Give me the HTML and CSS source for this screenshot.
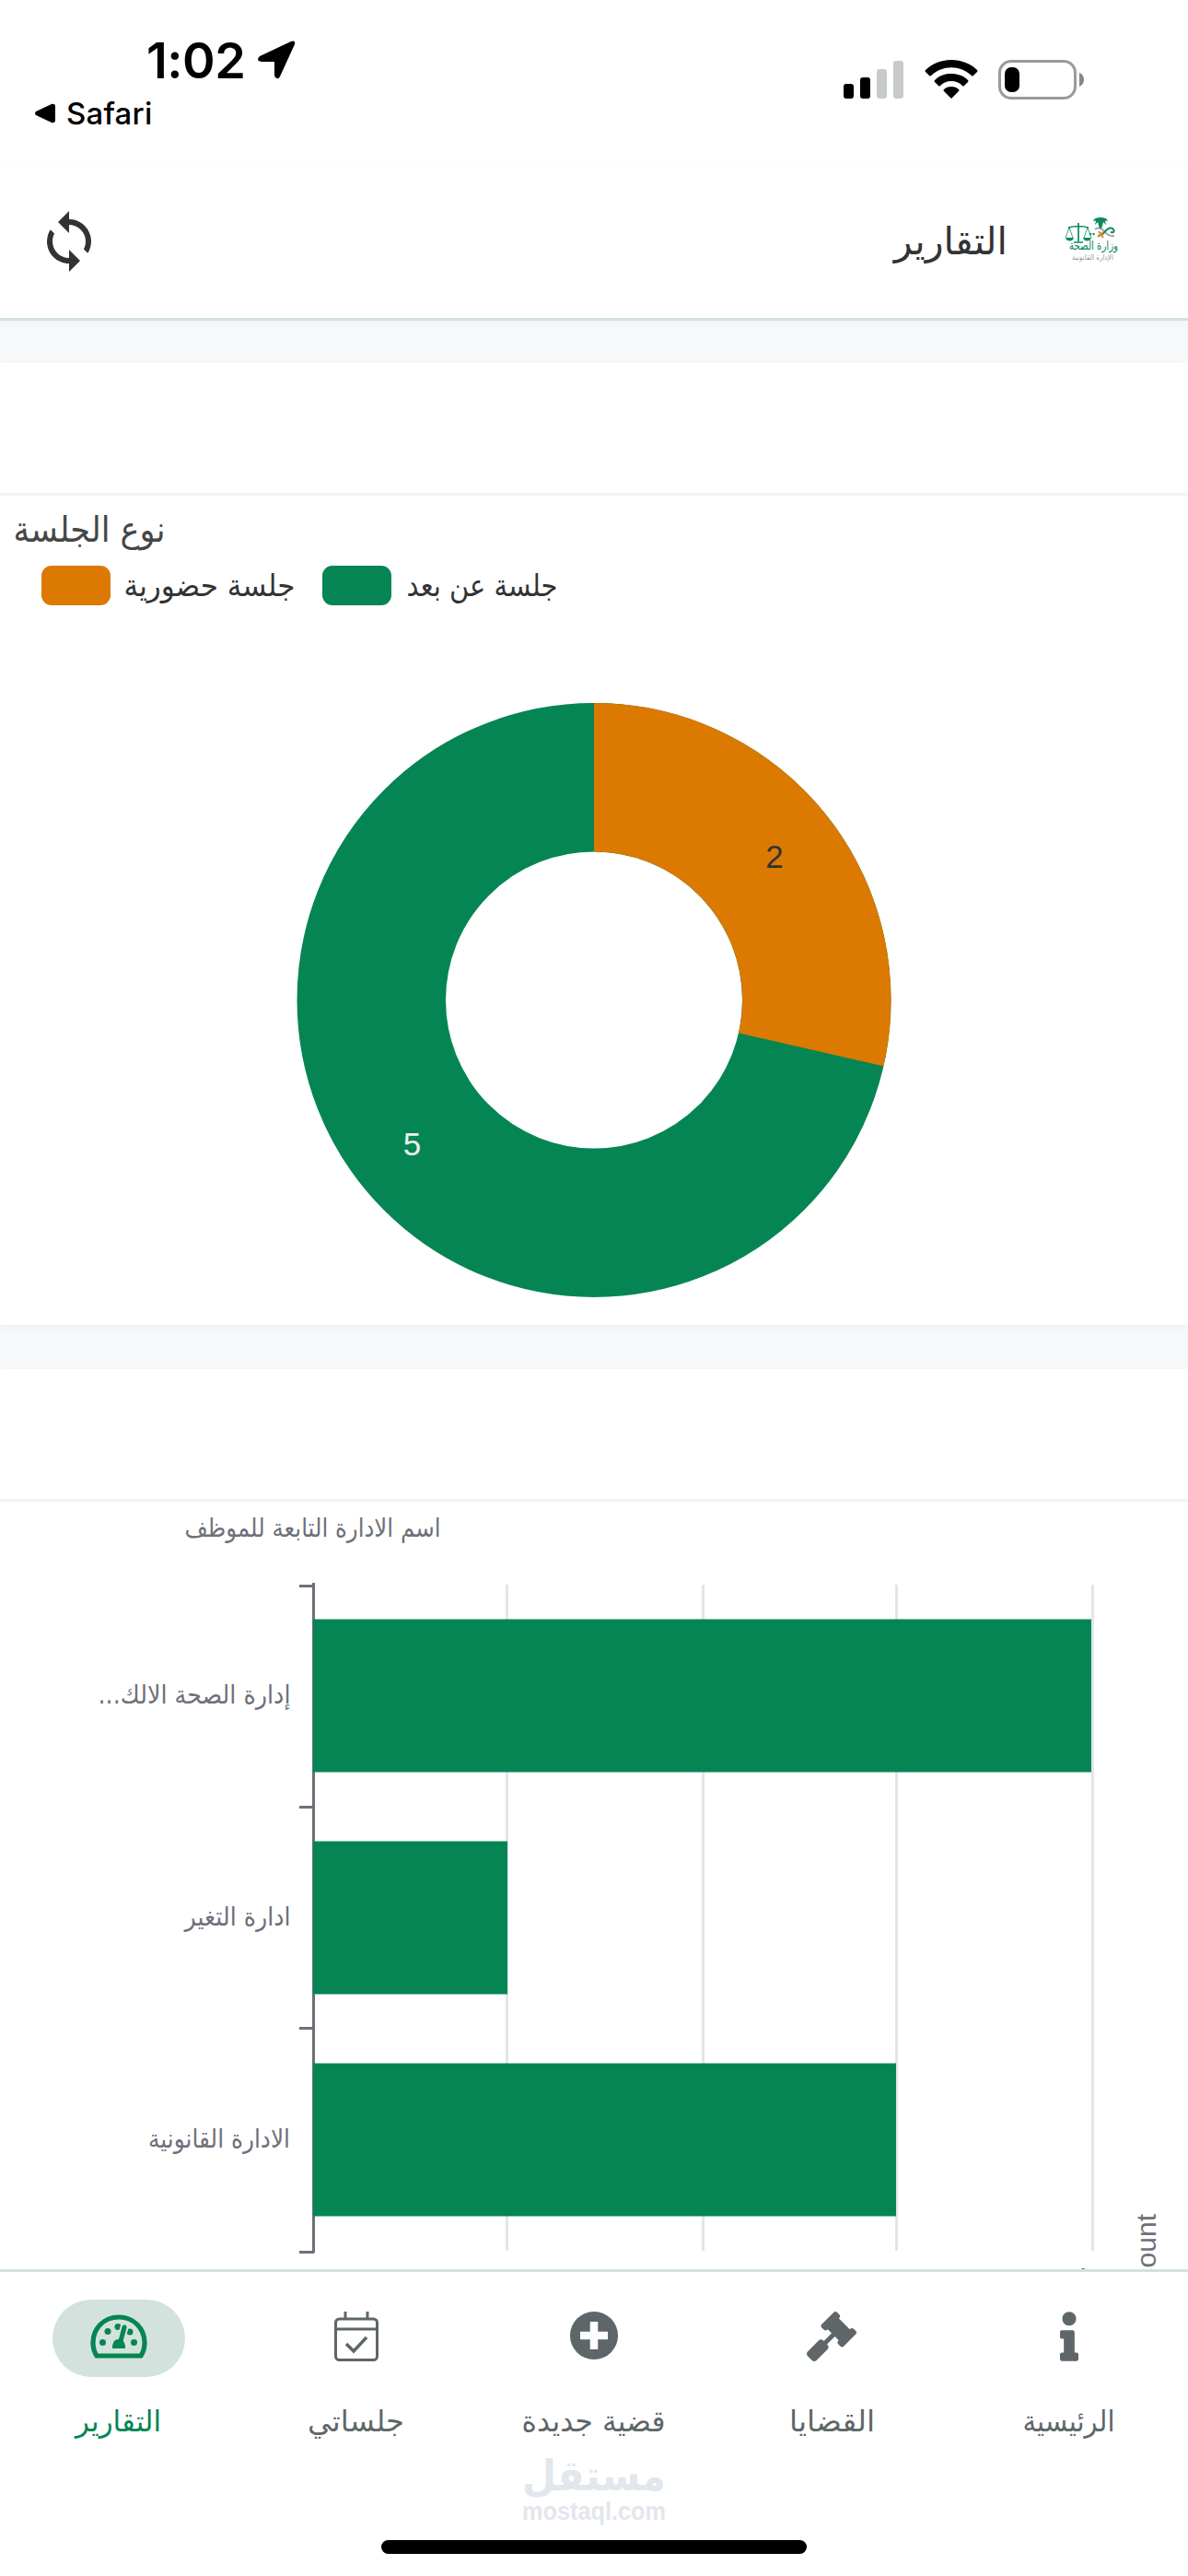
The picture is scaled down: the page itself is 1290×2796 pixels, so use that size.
FILE: index.html
```html
<!DOCTYPE html>
<html lang="ar" dir="ltr">
<head>
<meta charset="utf-8">
<title>التقارير</title>
<link rel="stylesheet" href="styles.css">
</head>
<body>
<div class="app">
  <div class="status">
    <div class="status-left">
      <div class="clock"><span>1:02</span>
        <svg class="loc" viewBox="0 0 42 42"><path d="M3 17 37 1q5-2 4 3L25 39q-2 4-5 1-1-1-1-4V23H5Q-2 22 3 17z"/></svg>
      </div>
      <div class="back"><svg class="tri" viewBox="0 0 22 22"><path d="M1 9 18 1q4-1 4 3v14q0 4-4 3L1 13q-2-2 0-4z"/></svg><span>Safari</span></div>
    </div>
    <div class="status-right">
      <svg class="signal" viewBox="0 0 65 43"><rect y="26" width="11" height="16" rx="3"/><rect x="18" y="19" width="11" height="23" rx="3"/><g fill="#c6cac9"><rect x="36" y="10" width="11" height="32" rx="3"/><rect x="54" y="1" width="11" height="41" rx="3"/></g></svg>
      <svg class="wifi" viewBox="0 0 58 43"><path d="M29 0C18 0 8 4 1 11q-1 1 0 2l4 4q1 1 2 0a32 32 0 0 1 44 0q1 1 2 0l4-4q1-1 0-2C50 4 40 0 29 0zM29 15c-7 0-13 2-18 7q-1 1 0 2l4 4q1 1 2 0a17 17 0 0 1 24 0q1 1 2 0l4-4q1-1 0-2c-5-5-11-7-18-7zM29 29q-5 0-8 3-1 1 0 2l8 8 8-8q1-1 0-2-3-3-8-3z"/></svg>
      <svg class="battery" viewBox="0 0 94 43"><rect x="1.500" y="1.500" width="82" height="40" rx="12.500" fill="none" stroke="#999b9a" stroke-width="3"/><rect x="7" y="8" width="16" height="27" rx="7"/><path d="M88 14q5 2 5 7.500t-5 7.500z" fill="#858789"/></svg>
    </div>
  </div>
  <header class="top">
    <svg class="sync" viewBox="0 0 24 24"><path d="M12 4V1L8 5l4 4V6c3.310 0 6 2.690 6 6 0 1.010-.25 1.970-.7 2.800l1.460 1.460C19.540 15.030 20 13.570 20 12c0-4.420-3.580-8-8-8zm0 14c-3.310 0-6-2.690-6-6 0-1.010.25-1.970.7-2.800L5.240 7.740C4.460 8.970 4 10.430 4 12c0 4.420 3.580 8 8 8v3l4-4-4-4v3z"/></svg>
    <div class="brand">
      <h1 dir="rtl">التقارير</h1>
      <svg class="logo" viewBox="0 0 60 50">
        <g fill="none" stroke="#0b8a5a"><path d="M15 5v20M4 10q11-3 22 0M10 26h10" stroke-width="1.700"/><path d="M5 10 1 21M5 10l4 11M25 10l-4 11M25 10l4 11" stroke-width=".8"/><path d="M54 19q-6 1-10-4-6-7-11-3" stroke="#a0a3a0" stroke-width="2"/><path d="M36 19q5 0 8-5 6-6 9-2 2 4-3 3" stroke-width="2"/></g>
        <g fill="#0b8a5a"><path d="M1 21h9q-1 3.500-4.500 3.500T1 21zM20 21h9q-1 3.500-4.500 3.500T20 21z"/><path d="M31 3q1-4 8-4 7 0 8 4-2-1-3 0l1 4-3-3-1 4-1 3h-2l-1-3-1-4-3 3 1-4q-1-1-3 0z"/><circle cx="28" cy="17" r="1.200"/><circle cx="31.500" cy="17" r="1.200"/></g>
        <path d="m36 20 6-5M37 14l5 7" stroke="#d98b32" stroke-width="2"/>
        <text class="logo-a" x="31.500" y="34" textLength="53" lengthAdjust="spacingAndGlyphs">وزارة الصحة</text>
        <text class="logo-b" x="30.500" y="44.500" textLength="45" lengthAdjust="spacingAndGlyphs">الإدارة القانونية</text>
      </svg>
    </div>
  </header>
  <main>
    <section class="card">
      <div class="card-head"></div>
      <svg class="chart donut" viewBox="0 538 1290 900">
        <text class="t-title" x="97" y="588" textLength="165" lengthAdjust="spacingAndGlyphs">نوع الجلسة</text>
        <rect x="45" y="614" width="75" height="43" rx="11" fill="#db7900"/>
        <text class="t-legend" x="227.500" y="647" textLength="186" lengthAdjust="spacingAndGlyphs">جلسة حضورية</text>
        <rect x="350" y="614" width="75" height="43" rx="11" fill="#058554"/>
        <text class="t-legend" x="523.500" y="647" textLength="164" lengthAdjust="spacingAndGlyphs">جلسة عن بعد</text>
        <circle cx="645" cy="1085.500" r="241.750" fill="none" stroke="#058554" stroke-width="161.500"/>
        <path d="M645 763A322.500 322.500 0 0 1 959.400 1157.300L802 1121.300A161 161 0 0 0 645 924.500z" fill="#db7900"/>
        <text class="t-num" x="841" y="942" fill="#333">2</text>
        <text class="t-num" x="447.500" y="1254" fill="#eee">5</text>
      </svg>
    </section>
    <section class="card">
      <div class="card-head"></div>
      <svg class="chart bars" viewBox="0 1630 1290 833">
        <text class="t-axis" x="339.500" y="1668" textLength="278" lengthAdjust="spacingAndGlyphs">اسم الادارة التابعة للموظف</text>
        <path d="M550.500 1720v723M763.500 1720v723M973.500 1720v723M1186.500 1720v723" stroke="#e0e6eb" stroke-width="3"/>
        <path d="M340.500 1718v727M325 1721.500h16M325 1961.500h16M325 2201.500h16M325 2444.500h16" stroke="#6e7079" stroke-width="3" fill="none"/>
        <path d="M340 1757.500h845v166H340zM340 1998.500h211v166H340zM340 2239.500h633v166H340z" fill="#058554"/>
        <text class="t-axis" x="211" y="1849" textLength="209" lengthAdjust="spacingAndGlyphs" direction="rtl">إدارة الصحة الالك...</text>
        <text class="t-axis" x="258" y="2090" textLength="115" lengthAdjust="spacingAndGlyphs">ادارة التغير</text>
        <text class="t-axis" x="238" y="2331" textLength="154" lengthAdjust="spacingAndGlyphs">الادارة القانونية</text>
        <g class="ticks"><text x="330" y="2485">0</text><text x="753" y="2484.500">2</text><text x="963" y="2484.500">3</text><text x="1173" y="2484">4</text></g>
        <text class="t-count" transform="translate(1255 2403) rotate(-90)">Count</text>
      </svg>
    </section>
  </main>
  <nav class="nav">
    <div class="tabs">
      <a class="tab active"><span class="pill"><svg width="62" height="48" viewBox="0 0 62 48"><path d="M7 45Q3 39 3 31C3 15 15 3 31 3s28 12 28 28q0 8-4 14z" fill="none" stroke="#058554" stroke-width="5.200"/><g fill="#058554"><circle cx="13.500" cy="30.500" r="3.500"/><circle cx="19" cy="18.500" r="3.500"/><circle cx="30" cy="13.500" r="3.500"/><circle cx="43" cy="19" r="3.500"/><circle cx="47.500" cy="30.500" r="3.500"/></g><path d="m37 14-5 19" stroke="#d3e2dc" stroke-width="9" stroke-linecap="round"/><path d="m37 14-5 19" stroke="#058554" stroke-width="5" stroke-linecap="round"/><path d="M24 37v-3q1-7 7-7t7 7v3z" fill="#058554"/></svg></span><svg class="lbl" viewBox="0 0 258 70"><text x="128.500" y="42" textLength="93" lengthAdjust="spacingAndGlyphs">التقارير</text></svg></a>
      <a class="tab"><span class="pill"><svg width="48" height="54" viewBox="0 0 48 54" fill="none" stroke="#5e6669" stroke-width="3"><rect x="1.500" y="8" width="45" height="44.500" rx="4"/><path d="M2 19h44M12 0v8M36 0v8"/><path d="m13 35 8 8 14-15" stroke-width="3.500"/></svg></span><svg class="lbl" viewBox="0 0 258 70"><text x="128.500" y="42" textLength="105" lengthAdjust="spacingAndGlyphs">جلساتي</text></svg></a>
      <a class="tab"><span class="pill"><svg width="52" height="52" viewBox="0 0 52 52"><circle cx="26" cy="26" r="26" fill="#5e6669"/><path d="M26 11v30M11 26h30" stroke="#fff" stroke-width="8.500"/></svg></span><svg class="lbl" viewBox="0 0 258 70"><text x="128.500" y="42" textLength="156" lengthAdjust="spacingAndGlyphs">قضية جديدة</text></svg></a>
      <a class="tab"><span class="pill"><svg width="54" height="54" viewBox="0 0 512 512"><path fill="#5e6669" d="M504.971 199.362l-22.627-22.627c-9.373-9.373-24.569-9.373-33.941 0l-5.657 5.657L329.608 69.255l5.657-5.657c9.373-9.373 9.373-24.569 0-33.941L312.638 7.029c-9.373-9.373-24.569-9.373-33.941 0L154.246 131.480c-9.373 9.373-9.373 24.569 0 33.941l22.627 22.627c9.373 9.373 24.569 9.373 33.941 0l5.657-5.657 39.598 39.598-81.040 81.040-5.657-5.657c-12.497-12.497-32.758-12.497-45.255 0L9.373 412.118c-12.497 12.497-12.497 32.758 0 45.255l45.255 45.255c12.497 12.497 32.758 12.497 45.255 0l114.745-114.745c12.497-12.497 12.497-32.758 0-45.255l-5.657-5.657 81.040-81.040 39.598 39.598-5.657 5.657c-9.373 9.373-9.373 24.569 0 33.941l22.627 22.627c9.373 9.373 24.569 9.373 33.941 0l124.451-124.451c9.372-9.372 9.372-24.568 0-33.941z"/></svg></span><svg class="lbl" viewBox="0 0 258 70"><text x="129.500" y="42" textLength="93" lengthAdjust="spacingAndGlyphs">القضايا</text></svg></a>
      <a class="tab"><span class="pill"><svg width="20" height="54" viewBox="0 0 192 512"><path fill="#5e6669" d="M20 424.229h20V279.771H20c-11.046 0-20-8.954-20-20V212c0-11.046 8.954-20 20-20h112c11.046 0 20 8.954 20 20v212.229h20c11.046 0 20 8.954 20 20V492c0 11.046-8.954 20-20 20H20c-11.046 0-20-8.954-20-20v-47.771c0-11.046 8.954-20 20-20zM96 0C56.235 0 24 32.235 24 72s32.235 72 72 72 72-32.235 72-72S135.764 0 96 0z"/></svg></span><svg class="lbl" viewBox="0 0 258 70"><text x="128.500" y="42" textLength="100" lengthAdjust="spacingAndGlyphs">الرئيسية</text></svg></a>
    </div>
    <div class="mark"><svg class="mark-ar" viewBox="0 0 156 48"><text class="mark-a" x="78" y="36" textLength="156" lengthAdjust="spacingAndGlyphs">مستقل</text></svg><svg class="mark-en" viewBox="0 0 156 32"><text class="mark-b" x="78" y="20" textLength="156" lengthAdjust="spacingAndGlyphs">mostaql.com</text></svg></div>
    <div class="home"></div>
  </nav>
</div>
</body>
</html>
```
FILE: styles.css
```css
* { box-sizing: border-box; }
body { margin: 0; background: #f6f8fa; }
svg { display: block; overflow: visible; }
.app { width: 1290px; height: 2796px; display: flex; flex-direction: column; overflow: hidden; font-family: "DejaVu Sans", "Noto Sans", sans-serif; }
.status { height: 178px; flex: none; background: #fff; display: flex; justify-content: space-between; font-family: Inter, sans-serif; }
.status-left { padding: 32px 0 0 38px; }
.clock { display: flex; align-items: center; gap: 13px; padding-left: 121px; height: 66px; font-size: 54px; font-weight: 600; letter-spacing: -.5px; }
.loc { width: 42px; height: 42px; }
.back { display: flex; align-items: center; gap: 12px; height: 50px; font-size: 33px; font-weight: 500; letter-spacing: .2px; }
.tri { width: 22px; height: 22px; }
.status-right { display: flex; padding: 65px 112px 0 0; height: 108px; }
.signal { width: 65px; height: 43px; margin-right: 23px; }
.wifi { width: 58px; height: 43px; margin-right: 22px; }
.battery { width: 94px; height: 43px; }
.top { height: 170px; flex: none; background: #fff; border-bottom: 3px solid #d5e1dc; display: flex; justify-content: space-between; align-items: center; padding: 0 74px 0 39px; box-shadow: 0 3px 10px rgba(0,0,0,.035); position: relative; }
.sync { width: 72px; height: 72px; fill: #333; }
.brand { display: flex; align-items: center; gap: 62px; }
h1 { margin: 0; font-size: 41px; font-weight: 400; color: #333; }
.logo { width: 60px; height: 50px; }
.logo text, .chart text, .lbl text, .mark text { text-anchor: middle; }
.logo-a { font-size: 13px; fill: #0b8a5a; }
.logo-b { font-size: 8px; fill: #92979a; }
main { flex: none; height: 2115px; overflow: hidden; padding-top: 46px; display: flex; flex-direction: column; gap: 48px; }
.card { background: #fff; flex: none; box-shadow: 0 3px 9px rgba(0,0,0,.035); }
.card-head { height: 144px; border-bottom: 3px solid #f3f3f3; }
.chart { width: 1290px; }
.donut { height: 900px; }
.bars { height: 833px; }
.t-title { font-size: 38px; fill: #464646; }
.t-legend { font-size: 33px; fill: #333; }
.t-num { font: 35px "Liberation Sans", sans-serif; }
.t-axis { font-size: 28px; fill: #6e7079; }
.ticks { font: 32px "Liberation Sans", sans-serif; fill: #6e7079; }
.chart .t-count { font: 30px "Liberation Sans", sans-serif; fill: #6e7079; text-anchor: end; }
.nav { flex: none; height: 333px; position: relative; background: #fff; border-top: 3px solid #d5e1dc; display: flex; flex-direction: column; align-items: center; }
.tabs { display: grid; grid-template-columns: repeat(5, 1fr); width: 1290px; padding-top: 30px; height: 201px; }
.tab { display: flex; flex-direction: column; align-items: center; }
.pill { width: 144px; height: 84px; border-radius: 42px; display: flex; justify-content: center; padding-top: 13px; }
.active .pill { background: #d3e2dc; padding-top: 16px; }
.lbl { width: 258px; height: 70px; margin-top: 17px; font-size: 32px; fill: #5e6669; }
.active .lbl { fill: #058554; }
.mark { width: 156px; height: 80px; fill: #e2e6ed; }
.mark-ar { width: 156px; height: 48px; }
.mark-en { width: 156px; height: 32px; }
.mark-a { font-size: 46px; font-weight: 700; }
.mark-b { font: 700 27px "Liberation Sans", sans-serif; }
.home { width: 462px; height: 15px; border-radius: 8px; background: #000; margin-top: 10px; }
```
